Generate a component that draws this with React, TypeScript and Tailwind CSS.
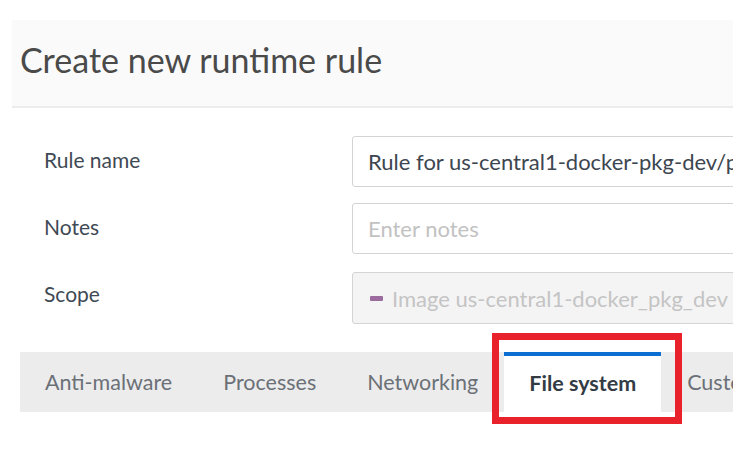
import React from 'react';

const tabs = ['Anti-malware', 'Processes', 'Networking', 'File system', 'Custom rules'];

function FormRow({ label, children }: { label: string; children: React.ReactNode }) {
  return (
    <div className="flex items-start">
      <div className="w-[340px] shrink-0 pl-[32px] pt-[8px] text-[21px] text-[#3f4a55]">{label}</div>
      {children}
    </div>
  );
}

export default function App() {
  const active = 'File system';

  return (
    <div className="relative h-[452px] w-[752px] bg-white font-['Lato','Noto_Sans',sans-serif]">
      <div className="ml-[12px] w-[721px] overflow-hidden pt-[20px]">
        <div className="flex h-[88px] items-start border-b-2 border-[#ececec] bg-[#fafafa] pt-[14px] pl-[8px]">
          <h1 className="text-[34px] text-[#4a4a4a]">Create new runtime rule</h1>
        </div>

        <div className="mt-[28px] flex flex-col gap-[16px]">
          <FormRow label="Rule name">
            <div className="flex h-[51px] w-[500px] shrink-0 items-center rounded-[3px] border border-[#d4d4d4] bg-white pl-[15px] text-[22px] whitespace-nowrap text-[#3d4650]">
              Rule for us-central1-docker-pkg-dev/project/image
            </div>
          </FormRow>
          <FormRow label="Notes">
            <div className="flex h-[51px] w-[500px] shrink-0 items-center rounded-[3px] border border-[#d4d4d4] bg-white pl-[15px] text-[22px] whitespace-nowrap text-[#c2c2c2]">
              Enter notes
            </div>
          </FormRow>
          <FormRow label="Scope">
            <div className="mt-[2px] flex h-[52px] w-[500px] shrink-0 items-center gap-[9px] rounded-[3px] border border-[#d4d4d4] bg-[#f4f4f4] pl-[17px] text-[22px] whitespace-nowrap text-[#c4c4c4]">
              <span className="h-[5px] w-[13px] rounded-[1px] bg-[#9a6b9c]" />
              Image us-central1-docker_pkg_dev - all images
            </div>
          </FormRow>
        </div>

        <div className="mt-[28px] ml-[8px] flex h-[60px] gap-[1px] bg-[#ececec]">
          {tabs.map((t) =>
            t === active ? (
              <div
                key={t}
                className="flex shrink-0 items-center border-t-4 border-[#0a6fd0] bg-white px-[25px] pb-[2px] text-[21.5px] font-bold whitespace-nowrap text-[#333c45]"
              >
                {t}
              </div>
            ) : (
              <div key={t} className="flex shrink-0 items-center px-[25px] text-[21.5px] whitespace-nowrap text-[#6b7077]">
                {t}
              </div>
            )
          )}
        </div>
      </div>

      <div className="absolute left-[492px] top-[333px] h-[91px] w-[190px] border-[7px] border-[#e8212b]" />
    </div>
  );
}
